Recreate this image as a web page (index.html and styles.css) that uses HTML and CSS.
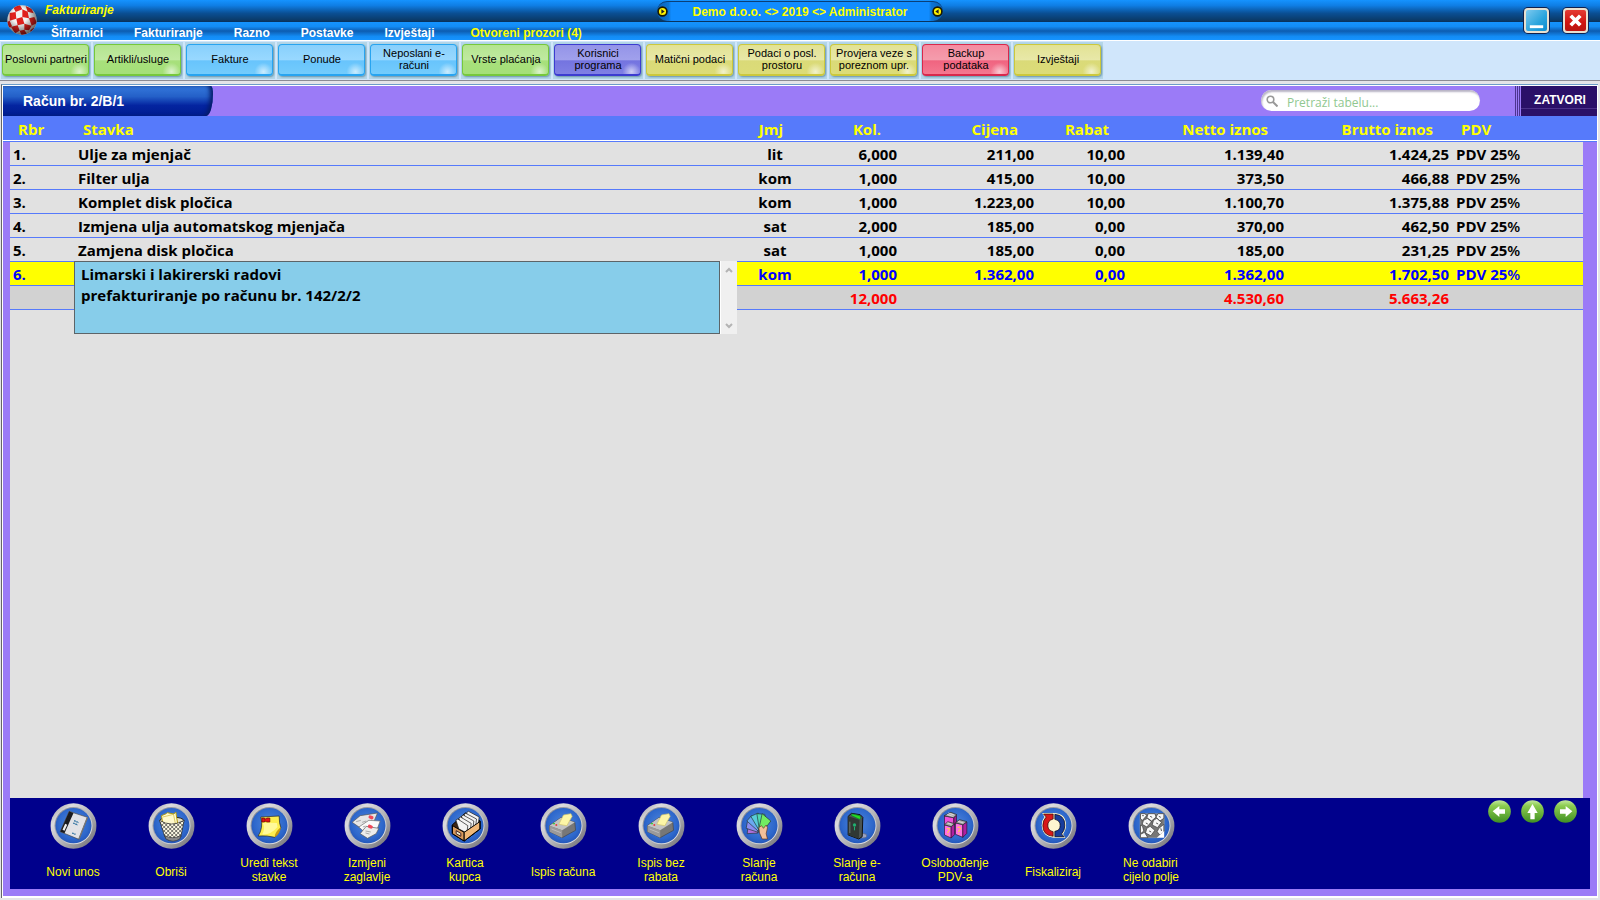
FILE: index.html
```html
<!DOCTYPE html>
<html lang="hr">
<head>
<meta charset="utf-8">
<title>Fakturiranje</title>
<link rel="stylesheet" href="styles.css">
</head>
<body>
<svg class="defs" aria-hidden="true">
  <defs>
    <linearGradient id="rim" x1="0" y1="0" x2="1" y2="1">
      <stop offset="0" stop-color="#8f8f95"/><stop offset=".25" stop-color="#dcdcde"/><stop offset=".55" stop-color="#b4b4b8"/><stop offset="1" stop-color="#66666c"/>
    </linearGradient>
    <linearGradient id="rimIn" x1="0" y1="0" x2="1" y2="1">
      <stop offset="0" stop-color="#777b88"/><stop offset="1" stop-color="#f4f4f4"/>
    </linearGradient>
    <radialGradient id="disc" cx=".5" cy=".45" r=".6">
      <stop offset="0" stop-color="#4f86dc"/><stop offset=".7" stop-color="#2e68cc"/><stop offset="1" stop-color="#2252b4"/>
    </radialGradient>
    <linearGradient id="leaf" x1="0" y1="0" x2="0" y2="1">
      <stop offset="0" stop-color="#c4e8a0"/><stop offset=".25" stop-color="#8ccc50"/><stop offset="1" stop-color="#3f8f22"/>
    </linearGradient>
    <radialGradient id="ball" cx=".42" cy=".35" r=".65">
      <stop offset=".4" stop-color="#000" stop-opacity="0"/><stop offset="1" stop-color="#000" stop-opacity=".6"/>
    </radialGradient>
    <clipPath id="ballClip"><circle cx="45" cy="45" r="44"/></clipPath>
    <pattern id="mesh" width="12" height="12" patternUnits="userSpaceOnUse">
      <rect width="12" height="12" fill="#fbf8e2"/><path d="M0 0l12 12M12 0L0 12" stroke="#222" stroke-width="1.8"/>
    </pattern>
    <symbol id="badge" viewBox="0 0 140 138">
      <ellipse cx="70" cy="69" rx="69" ry="68" fill="url(#rim)"/>
      <ellipse cx="70" cy="68" rx="57" ry="56" fill="url(#rimIn)"/>
      <ellipse cx="70" cy="68" rx="54" ry="53" fill="url(#disc)"/>
    </symbol>
    <symbol id="printer" viewBox="0 0 140 138">
      <path d="M28 68l34-24 42 14 2 24-40 22-38-18z" fill="#777" stroke="#444" stroke-width="2"/>
      <path d="M28 68l34-24 42 14-38 24z" fill="#c3c3c3"/>
      <path d="M28 68l38 14v22L28 86z" fill="#9a9a9a"/>
      <path d="M34 78l28 11" stroke="#bbb" stroke-width="3"/>
      <path d="M56 64l14-28 22-4 4 8-16 28z" fill="#fdf6a6" stroke="#cfc36a" stroke-width="2"/>
      <path d="M39 62h5" stroke="#2c2" stroke-width="4"/><path d="M46 66h5" stroke="#e22" stroke-width="4"/>
    </symbol>
  </defs>
</svg>

<header class="titlebar">
  <svg class="logo" viewBox="0 0 90 90" aria-hidden="true">
    <circle cx="45" cy="45" r="44" fill="#f5f3f2"/>
    <g clip-path="url(#ballClip)" fill="#e0201c">
      <path d="M18 5l20-6 8 14-20 8zM56 3l18 8 6 14-18-5zM8 24l18-3 2 20-20 6zM46 13l16 7 4 20-20-4zM28 41l18-5 6 20-20 5zM66 40l16-4 8 18-16 8zM8 47l-10 5 6 16 12-3zM12 65l20-4 6 16-14 8zM52 56l22 6-8 14-14-2zM38 77l14-3 8 14-16 4zM70 76l10-8 4 8-12 10z"/>
    </g>
    <circle cx="45" cy="45" r="44" fill="url(#ball)"/>
  </svg>
  <div class="heading">
    <h1>Fakturiranje</h1>
    <nav class="menu">
      <a href="#">Šifrarnici</a><a href="#">Fakturiranje</a><a href="#">Razno</a><a href="#">Postavke</a><a href="#">Izvještaji</a><a href="#" class="open">Otvoreni prozori (4)</a>
    </nav>
  </div>
  <div class="session">
    <svg viewBox="0 0 10 10" aria-hidden="true"><circle cx="5" cy="5" r="4" fill="#fff200" stroke="#1c1a00" stroke-width="1.5"/><path d="M4 3l3 2-3 2z" fill="#222"/></svg>
    <span>Demo d.o.o. &lt;&gt; 2019 &lt;&gt; Administrator</span>
    <svg viewBox="0 0 10 10" aria-hidden="true"><circle cx="5" cy="5" r="4" fill="#fff200" stroke="#1c1a00" stroke-width="1.5"/><path d="M6 3L3 5l3 2z" fill="#222"/></svg>
  </div>
  <div class="winbuttons">
    <button class="win min" aria-label="Minimiziraj"><svg viewBox="0 0 22 22"><path d="M4 17.500h14" stroke="#fff" stroke-width="3"/></svg></button>
    <button class="win close" aria-label="Zatvori program"><svg viewBox="0 0 22 22"><path d="M6 6l10 10M16 6L6 16" stroke="#fff" stroke-width="4"/></svg></button>
  </div>
</header>

<nav class="toolbar">
  <button class="green">Poslovni partneri</button>
  <button class="green">Artikli/usluge</button>
  <button class="blue">Fakture</button>
  <button class="blue">Ponude</button>
  <button class="blue">Neposlani e-<br>računi</button>
  <button class="green">Vrste plaćanja</button>
  <button class="indigo">Korisnici<br>programa</button>
  <button class="olive">Matični podaci</button>
  <button class="olive">Podaci o posl.<br>prostoru</button>
  <button class="olive">Provjera veze s<br>poreznom upr.</button>
  <button class="red">Backup<br>podataka</button>
  <button class="olive">Izvještaji</button>
</nav>

<main class="panel">
  <div class="panelhead">
    <h2>Račun br. 2/B/1</h2>
    <label class="search">
      <svg viewBox="0 0 12 12" aria-hidden="true"><circle cx="4.500" cy="4.500" r="3.300" fill="none" stroke="#999" stroke-width="1.600"/><path d="M7 7l4.500 4.500" stroke="#999" stroke-width="2"/></svg>
      <input type="text" placeholder="Pretraži tabelu..." aria-label="Pretraži tabelu">
    </label>
    <button class="closetab">ZATVORI</button>
  </div>

  <div class="gridarea">
    <div class="grid">
      <table>
        <colgroup><col class="c-no"><col><col class="c-unit"><col class="c-small"><col class="c-price"><col class="c-small"><col class="c-net"><col class="c-gross"><col class="c-vat"></colgroup>
        <thead>
          <tr><th>Rbr</th><th>Stavka</th><th class="unit">Jmj</th><th class="num">Kol.</th><th class="num">Cijena</th><th class="num">Rabat</th><th class="num">Netto iznos</th><th class="num">Brutto iznos</th><th>PDV</th></tr>
        </thead>
        <tbody>
          <tr><td>1.</td><td>Ulje za mjenjač</td><td class="unit">lit</td><td class="num">6,000</td><td class="num">211,00</td><td class="num">10,00</td><td class="num">1.139,40</td><td class="num">1.424,25</td><td>PDV 25<span class="pct">%</span></td></tr>
          <tr><td>2.</td><td>Filter ulja</td><td class="unit">kom</td><td class="num">1,000</td><td class="num">415,00</td><td class="num">10,00</td><td class="num">373,50</td><td class="num">466,88</td><td>PDV 25<span class="pct">%</span></td></tr>
          <tr><td>3.</td><td>Komplet disk pločica</td><td class="unit">kom</td><td class="num">1,000</td><td class="num">1.223,00</td><td class="num">10,00</td><td class="num">1.100,70</td><td class="num">1.375,88</td><td>PDV 25<span class="pct">%</span></td></tr>
          <tr><td>4.</td><td>Izmjena ulja automatskog mjenjača</td><td class="unit">sat</td><td class="num">2,000</td><td class="num">185,00</td><td class="num">0,00</td><td class="num">370,00</td><td class="num">462,50</td><td>PDV 25<span class="pct">%</span></td></tr>
          <tr><td>5.</td><td>Zamjena disk pločica</td><td class="unit">sat</td><td class="num">1,000</td><td class="num">185,00</td><td class="num">0,00</td><td class="num">185,00</td><td class="num">231,25</td><td>PDV 25<span class="pct">%</span></td></tr>
          <tr class="current"><td>6.</td>
            <td class="editcell">
              <div class="editor">
                <textarea aria-label="Stavka">Limarski i lakirerski radovi
prefakturiranje po računu br. 142/2/2</textarea>
                <div class="scroll">
                  <button aria-label="Gore"><svg viewBox="0 0 8 6"><path d="M1 5l3-3 3 3" fill="none" stroke="#b4b4b4" stroke-width="2"/></svg></button>
                  <button aria-label="Dolje"><svg viewBox="0 0 8 6"><path d="M1 1l3 3 3-3" fill="none" stroke="#b4b4b4" stroke-width="2"/></svg></button>
                </div>
              </div>
            </td>
            <td class="unit">kom</td><td class="num">1,000</td><td class="num">1.362,00</td><td class="num">0,00</td><td class="num">1.362,00</td><td class="num">1.702,50</td><td>PDV 25<span class="pct">%</span></td></tr>
        </tbody>
        <tfoot>
          <tr><td></td><td></td><td></td><td class="num">12,000</td><td></td><td></td><td class="num">4.530,60</td><td class="num">5.663,26</td><td></td></tr>
        </tfoot>
      </table>
    </div>
  </div>

  <footer class="actions">
    <button class="action single">
      <svg viewBox="0 0 140 138" aria-hidden="true"><use href="#badge"/>
        <path d="M57 25l55 18-26 66-56-23z" fill="#e2e2e6" stroke="#444" stroke-width="2"/>
        <path d="M57 25l13 5-27 61-13-5z" fill="#1a1a1e"/><path d="M45 62l6 3-8 18-6-3z" fill="#eee"/>
        <path d="M72 53l14 6M69 60l14 6M66 90l10 4" stroke="#236b9c" stroke-width="4" stroke-dasharray="5 2"/>
        <path d="M112 43l-26 66" stroke="#777" stroke-width="4"/>
      </svg><span>Novi unos</span></button>
    <button class="action single">
      <svg viewBox="0 0 140 138" aria-hidden="true"><use href="#badge"/>
        <ellipse cx="71" cy="53" rx="36" ry="11" fill="#e8e4c8" stroke="#222" stroke-width="3"/>
        <path d="M40 38l14-6 3-3 20 4 6-6 6 38-44 4z" fill="#fff9cc" stroke="#b09a10" stroke-width="3"/>
        <path d="M44 42l32-8M76 34l6 30" stroke="#c8b430" stroke-width="2"/>
        <path d="M34 52q36 22 74 0l-10 50q-27 22-48 0z" fill="url(#mesh)" stroke="#222" stroke-width="2"/>
        <path d="M50 98q24 12 48 0l-3 10q-20 13-42 0z" fill="#888" stroke="#333" stroke-width="2"/>
      </svg><span>Obriši</span></button>
    <button class="action">
      <svg viewBox="0 0 140 138" aria-hidden="true"><use href="#badge"/>
        <path d="M44 42l55-3q0 24 5 34-7 20-18 30-22-6-50-4 16-24 8-57z" fill="#fdee50" stroke="#222" stroke-width="2"/>
        <path d="M86 103q-2-14 18-30-2 20-18 30z" fill="#c99c12"/><path d="M50 60q20-2 42 0l2 12q-20 24-46 22 10-16 2-34z" fill="#fff99a"/>
        <path d="M47 45h8v4l8-4h8v12h-8l-8-3v3h-8z" fill="#e31414" stroke="#600" stroke-width="2"/>
      </svg><span>Uredi tekst<br>stavke</span></button>
    <button class="action">
      <svg viewBox="0 0 140 138" aria-hidden="true"><use href="#badge"/>
        <path d="M24 58l24-20 52-8-10 24-40 22z" fill="#e6e6e6" stroke="#555" stroke-width="2"/>
        <path d="M44 72l30-20 34 2-8 22-36 14z" fill="#fafafa" stroke="#666" stroke-width="2"/>
        <path d="M48 92l18-22 38 6-8 16-26 14z" fill="#ececec" stroke="#555" stroke-width="2"/>
        <path d="M78 42l5 2M76 70l5 2" stroke="#f04858" stroke-width="10" stroke-linecap="round"/>
        <path d="M36 56l14-4M54 58l12-4M56 72l8-3M64 84l16 3M64 90l12 3" stroke="#888" stroke-width="2"/>
      </svg><span>Izmjeni<br>zaglavlje</span></button>
    <button class="action">
      <svg viewBox="0 0 140 138" aria-hidden="true"><use href="#badge"/>
        <path d="M30 66l40-36 44 24v24l-48 36-36-22z" fill="#3c2514" stroke="#000" stroke-width="3"/>
        <g fill="#f3f3f3" stroke="#111" stroke-width="2"><path d="M73 29l6-4 32 17-3 26-26-10z"/><path d="M66 34l5-3 32 17-3 26-26-10z"/><path d="M58 39l5-3 32 18-3 25-26-10z"/><path d="M50 45l5-3 32 19-3 25-26-12z"/><path d="M41 51l6-3 30 20-3 22-24-12z"/></g>
        <path d="M31 68l35 20v26L31 92z" fill="#d89a5c" stroke="#000" stroke-width="3"/><path d="M66 88l47-32v22l-47 36z" fill="#f0b878" stroke="#000" stroke-width="3"/>
        <path d="M42 83l14 8v9l-14-8z" fill="#eec" stroke="#422" stroke-width="3"/>
      </svg><span>Kartica<br>kupca</span></button>
    <button class="action single"><svg viewBox="0 0 140 138" aria-hidden="true"><use href="#badge"/><use href="#printer"/></svg><span>Ispis računa</span></button>
    <button class="action"><svg viewBox="0 0 140 138" aria-hidden="true"><use href="#badge"/><use href="#printer"/></svg><span>Ispis bez<br>rabata</span></button>
    <button class="action">
      <svg viewBox="0 0 140 138" aria-hidden="true"><use href="#badge"/>
        <g stroke="#233" stroke-width="2">
          <path d="M66 90l-33 2 2-16 22-4z" fill="#b070dc"/><path d="M66 88L30 76l4-22 24 8z" fill="#8a8cf0"/><path d="M68 86L32 54l14-16 18 20z" fill="#6aa8f0"/><path d="M70 84L44 40l22-10 10 30z" fill="#58ccd8"/><path d="M70 82l-8-50 24 2 4 30z" fill="#50d8b0"/><path d="M68 78l10-46 26 22-20 26z" fill="#72ec62"/>
        </g>
        <path d="M68 74l8-6 6 8 8-10 4 8-4 18 4 16H78l-8-18z" fill="#f2c09a" stroke="#5c3420" stroke-width="2"/>
      </svg><span>Slanje<br>računa</span></button>
    <button class="action">
      <svg viewBox="0 0 140 138" aria-hidden="true"><use href="#badge"/>
        <path d="M74 104q30 4 22-10l-14-4z" fill="#9aa4c4" stroke="#667" stroke-width="2"/>
        <path d="M42 40l10-9 26 4 8 8-2 58-10 7-32-12z" fill="#4c5450" stroke="#111" stroke-width="3"/>
        <path d="M42 40l34 10-2 57-32-12z" fill="#303834"/><path d="M51 37l4-4 22 5 3 7-4 4z" fill="#28dc20" stroke="#083" stroke-width="2"/>
        <circle cx="61" cy="66" r="5" fill="#20b070"/><path d="M61 72v10" stroke="#20b070" stroke-width="3"/><path d="M47 56v34" stroke="#707a74" stroke-width="3"/>
      </svg><span>Slanje e-<br>računa</span></button>
    <button class="action">
      <svg viewBox="0 0 140 138" aria-hidden="true"><use href="#badge"/>
        <g stroke="#301030" stroke-width="2">
          <path d="M37 39l28 5v26l-28-5z" fill="#f050d8"/><path d="M65 44l8-8v24l-8 6z" fill="#a01890"/>
          <path d="M37 66l20 5v34l-20-9z" fill="#ff6ee0"/><path d="M57 71l10-8v32l-10 10z" fill="#b020a0"/>
          <path d="M70 60l22 5v38l-22-9z" fill="#ff6ee0"/><path d="M92 65l12-8v34l-12 12z" fill="#b020a0"/>
        </g>
        <path d="M36 38l20-10 18 7-10 9zM37 65l10-9 20 6-10 9zM70 59l12-9 22 6-12 9z" fill="#a9a9a9" stroke="#222" stroke-width="2"/>
        <path d="M44 34l18 6M48 30l18 6M46 60l12 4M78 55l16 5" stroke="#eee" stroke-width="2"/>
        <path d="M44 77q8-4 8 4l-5 6v3M47 94v3M76 73q9-4 9 4l-5 7v3M80 91v3" fill="none" stroke="#ffe22e" stroke-width="3"/>
      </svg><span>Oslobođenje<br>PDV-a</span></button>
    <button class="action single">
      <svg viewBox="0 0 140 138" aria-hidden="true"><use href="#badge"/>
        <circle cx="71" cy="67" r="36" fill="#fff6d0"/>
        <path d="M36 30h36v74q-36-2-37-37 0-14 8-25z" fill="#fff6d0"/><path d="M106 104H72V31q36 0 35 36 0 16-8 27z" fill="#fff6d0"/>
        <path d="M40 33h29v15q-17 4-16 21 1 14 16 17v14q-31-3-31-32 0-16 10-26z" fill="#d81818" stroke="#200" stroke-width="2"/>
        <path d="M102 101H74V85q16-2 16-18 0-14-16-18V34q30 2 30 33 0 16-10 26z" fill="#173c9c" stroke="#001" stroke-width="2"/>
      </svg><span>Fiskaliziraj</span></button>
    <button class="action left">
      <svg viewBox="0 0 140 138" aria-hidden="true"><use href="#badge"/>
        <path d="M36 32h72v54l-18 18H36z" fill="#777" stroke="#999" stroke-width="2"/>
        <g fill="#f8f8f8" stroke="#333" stroke-width="2"><path d="M37 32h14l4 6-12 14-6-4zM60 32h20l4 10-14 12-14-10zM90 32h17v14l-12 8-12-12zM46 52l12-6 12 10-14 16-14-8zM76 52l10-6 14 12-12 16-16-8zM37 66l6 4 4 14-10 8zM56 76l10-6 14 12-12 16-16-8zM92 76l15-12v24l-12 8-8-10zM37 94l12-6 10 16H37z"/></g>
        <path d="M66 40l6 3M92 40l6 3M53 60l6 3M84 60l6 3M63 84l6 3M98 76l2 8M42 38h5" stroke="#555" stroke-width="3"/>
        <path d="M86 104l22-20v20z" fill="#fff"/>
      </svg><span>Ne odabiri<br>cijelo polje</span></button>
    <div class="arrows">
      <button aria-label="Prethodni"><svg viewBox="0 0 69 69"><circle cx="34.500" cy="34.500" r="34" fill="url(#leaf)"/><path d="M14 34l20-16v10h17v13H34v10z" fill="#fff"/></svg></button>
      <button aria-label="Gore"><svg viewBox="0 0 69 69"><circle cx="34.500" cy="34.500" r="34" fill="url(#leaf)"/><path d="M34.500 12L50 39h-9v19H28V39h-9z" fill="#fff"/></svg></button>
      <button aria-label="Sljedeći"><svg viewBox="0 0 69 69"><circle cx="34.500" cy="34.500" r="34" fill="url(#leaf)"/><path d="M55 34L35 18v10H18v13h17v10z" fill="#fff"/></svg></button>
    </div>
  </footer>
</main>
</body>
</html>
```
FILE: styles.css
```css
* { box-sizing: border-box; }
html, body { height: 100%; }
body {
  margin: 0;
  display: flex;
  flex-direction: column;
  font-family: "Liberation Sans", Arial, sans-serif;
  font-size: 12px;
  background: #e4e4e8;
}
button { font: inherit; border: 0; padding: 0; margin: 0; background: none; cursor: pointer; }
svg { display: block; }
.defs { position: absolute; width: 0; height: 0; }

/* title bar */
.titlebar {
  position: relative;
  display: flex;
  height: 40px;
  flex: none;
  padding: 0 12px 0 7px;
  background:
    linear-gradient(#1593ff, #0f7ee4 25%, #0a4f94 60%, #0a3a68 92%, #08305a) 0 0 / 100% 22px no-repeat,
    linear-gradient(#1593ff, #138cf4 25%, #0d5cb0 50%, #138cf4 80%, #1593ff) 0 22px / 100% 18px no-repeat;
}
.logo { width: 30px; height: 30px; margin-top: 5px; }
.heading { margin-left: 8px; font-weight: bold; }
.heading h1 { margin: 0; font-size: 12px; line-height: 20px; font-style: italic; color: #ff0; }
.menu { display: flex; gap: 31px; padding: 5px 0 0 6px; line-height: 16px; }
.menu a { color: #fff; text-decoration: none; }
.menu .open { color: #ff0; margin-left: 5px; }
.session {
  position: absolute;
  top: 1px;
  left: 50%;
  transform: translateX(-50%);
  width: 286px;
  height: 20px;
  display: flex;
  align-items: center;
  justify-content: space-between;
  border-radius: 10px;
  border-top: 1px solid #0a3f78;
  background: linear-gradient(90deg, #0a5fb4, #0c74d4 4%, #118cff 5%, #118cff 95%, #0c74d4 96%, #0a5fb4);
  color: #ff0;
  font-weight: bold;
}
.session svg { width: 11px; height: 11px; }
.winbuttons { display: flex; gap: 14px; margin: 8px 0 0 auto; }
.win {
  width: 25px;
  height: 25px;
  border: 2px solid #e8e0d0;
  border-radius: 4px;
  box-shadow: 0 0 0 1px #10204c;
}
.win svg { width: 21px; height: 21px; }
.min { background: linear-gradient(135deg, #7ccaf0, #2aa4dc 60%, #0c8cd0); }
.close { background: linear-gradient(#e43c34, #d01410 60%, #b81410); }

/* shortcut buttons */
.toolbar {
  flex: none;
  display: flex;
  gap: 2px;
  height: 41px;
  padding: 1px 1px 0;
  border-top: 1px solid #fff;
  border-bottom: 1px solid #8a8a94;
  background: #d0e6fb;
  font-size: 11px;
  line-height: 12px;
}
.toolbar button {
  width: 90px;
  height: 37px;
  border: 1px solid #b4d6e8;
  border-width: 2px 1px;
  padding-bottom: 3px;
  position: relative;
  background: #b4d6e8;
  white-space: nowrap;
  z-index: 0;
}
.toolbar button::before {
  content: "";
  position: absolute;
  inset: 0 1px 1px 0;
  z-index: -1;
  border: 1px solid var(--edge);
  border-bottom-width: 2px;
  border-radius: 4px;
  background:
    radial-gradient(circle at 90% 92%, #ffffffa0, #ffffff00 9px),
    linear-gradient(var(--top), var(--mid) 50%, var(--low) 55%, var(--end));
  box-shadow: 1px 1px 2px #6a94a8;
}
.green { --edge: #76c83c; --top: #b4e490; --mid: #c0eaa0; --low: #a8e07c; --end: #a4e078; }
.blue { --edge: #28a4f0; --top: #88d0fc; --mid: #98d8ff; --low: #68c4fc; --end: #74ccfc; }
.indigo { --edge: #3c3cd0; --top: #9494e8; --mid: #a0a0ec; --low: #7474e0; --end: #8080e4; }
.olive { --edge: #ccc83c; --top: #e2e294; --mid: #e8e8a8; --low: #dada78; --end: #dcdc78; }
.red { --edge: #d8284c; --top: #f48ca0; --mid: #f49cac; --low: #f06480; --end: #f47890; }

/* document panel */
.panel {
  flex: 1;
  display: flex;
  flex-direction: column;
  margin: 3px 2px 2px 1px;
  padding: 1px 1px 2px 1px;
  border-top: 1px solid #6c9cc8;
  border-left: 1px solid #666;
  background: linear-gradient(#9b7bf7, #9b7bf7) content-box, #fff;
}
.panelhead { display: flex; align-items: center; height: 30px; flex: none; }
.panelhead h2 {
  width: 210px;
  height: 30px;
  margin: 0;
  padding-left: 20px;
  font-size: 14px;
  line-height: 30px;
  color: #fff;
  background: linear-gradient(#3478dc, #2460c8 35%, #0424a0 65%, #001c90);
  border-radius: 0 2px 7px 0 / 0 8px 22px 0;
  box-shadow: inset -4px 0 4px -1px #061c68;
}
.search {
  display: flex;
  align-items: center;
  gap: 9px;
  width: 219px;
  height: 21px;
  margin: 0 0 1px auto;
  padding-left: 5px;
  border-radius: 11px;
  background: #fff;
  box-shadow: inset 1px 2px 2px #b8b4c4;
}
.search svg { width: 12px; height: 12px; flex: none; }
.search input {
  flex: 1;
  min-width: 0;
  border: 0;
  padding: 4px 0 0;
  outline: 0;
  background: none;
  font: 12px/16px "Open Sans", sans-serif;
}
.search input::placeholder { color: #90c890; opacity: 1; }
.closetab {
  width: 82px;
  height: 30px;
  margin-left: 35px;
  padding: 0 4px 3px 12px;
  color: #fff;
  font-weight: bold;
  text-align: center;
  background:
    linear-gradient(90deg, #4c3490 1px, #9b7bf7 1px 2px, #4c3490 2px 3px, #9b7bf7 3px 4px, #4c3490 4px 5px, #9b7bf7 5px 6px, transparent 6px),
    linear-gradient(#2a1068 22px, #4a3088 22px 23px, #2a1068 23px);
}

/* invoice lines */
.gridarea {
  flex: 1;
  display: flex;
  padding: 0 14px 0 7px;
  background: linear-gradient(#567afb 24px, #fff 24px 25px, #567afb 25px 26px, transparent 26px);
}
.grid { flex: 1; background: linear-gradient(transparent 26px, #e1e1e1 26px); }
table {
  width: 100%;
  table-layout: fixed;
  border-collapse: separate;
  border-spacing: 0;
  font: bold 15px/21px "Open Sans", "Noto Sans", sans-serif;
}
.c-no { width: 63px; }
.c-unit { width: 70px; }
.c-small { width: 91px; }
.c-price { width: 137px; }
.c-net { width: 159px; }
.c-gross { width: 165px; }
.c-vat { width: 130px; }
th { height: 26px; padding: 2px 8px 1px; line-height: 23px; text-align: left; color: #ff0; }
th:nth-child(2) { padding-left: 10px; }
th.unit { text-align: center; padding-left: 0; }
th.num { text-align: right; padding-right: 20px; }
td { height: 24px; padding: 2px 4px 0 3px; border-bottom: 1px solid #567afb; }
td.unit { text-align: center; padding-left: 0; padding-right: 0; }
td.num { text-align: right; }
td:nth-child(2) { padding-left: 5px; }
.pct { font-weight: 600; }
.current td { background: #ff0; color: #00f; }
tfoot td { background: #d2d2d2; color: #f00; }
.editcell { position: relative; }
.editor {
  position: absolute;
  top: -1px;
  left: 1px;
  right: 3px;
  height: 73px;
  display: flex;
}
.editor textarea {
  flex: 1;
  min-width: 0;
  margin: 0;
  padding: 2px 6px 0;
  border: 1px solid #5c6468;
  border-radius: 0;
  outline: 0;
  resize: none;
  overflow: hidden;
  background: #87cdea;
  color: #000;
  font: inherit;
}
.scroll {
  width: 17px;
  display: flex;
  flex-direction: column;
  justify-content: space-between;
  border-left: 1px solid #fff;
  background: #f0f0f0;
}
.scroll button { height: 17px; display: grid; place-items: center; }
.scroll svg { width: 8px; height: 6px; }

/* action bar */
.actions {
  flex: none;
  display: flex;
  margin: 0 7px 7px;
  padding: 5px 13px 5px 14px;
  background: #00008c;
  color: #ff0;
}
.action {
  width: 98px;
  display: flex;
  flex-direction: column;
  align-items: center;
  gap: 7px;
  color: #ff0;
  line-height: 14px;
}
.action svg { width: 47px; height: 46px; }
.action span { min-height: 28px; display: grid; align-items: center; }
.single span { padding-top: 4px; }
.left span { text-align: left; }
.arrows { display: flex; align-items: flex-start; gap: 10px; margin: -3px 0 0 auto; }
.arrows svg { width: 23px; height: 23px; }
```
